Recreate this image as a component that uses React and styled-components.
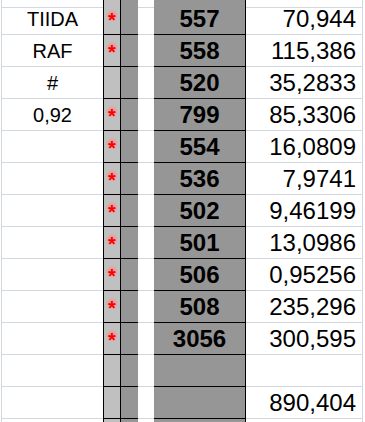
import React from "react";
import styled, { createGlobalStyle, css } from "styled-components";

const GRID = "#d3d7e0";
const INK = "#000";

const GlobalStyle = createGlobalStyle`
	html, body {
		margin: 0;
		padding: 0;
		background: #fff;
	}
	body {
		font-family: "Liberation Sans", Arial, sans-serif;
	}
`;

const Sheet = styled.div`
	width: 365px;
	height: 422px;
	overflow: hidden;
	padding-left: 1px;
	box-sizing: border-box;
	background: #fff;
`;

const Row = styled.div`
	display: grid;
	grid-template-columns: 102px 18px 17px 16px 92px 117px;
	height: ${({ $h }) => $h}px;
`;

const kinds = {
	label: css`
		border-left: 1px solid ${GRID};
		border-bottom: 1px solid ${GRID};
		justify-content: center;
		font-size: 20px;
		padding-top: 1px;
	`,
	mark: css`
		background: #c0c0c0;
		border-left: 1px solid ${INK};
		border-right: 1px solid ${INK};
		border-bottom: 1px solid ${INK};
		justify-content: center;
		align-items: flex-start;
		padding-top: 7px;
	`,
	shade: css`
		background: #969696;
		border-bottom: 1px solid ${INK};
	`,
	gap: css`
		border-bottom: 1px solid ${GRID};
	`,
	code: css`
		background: #969696;
		border-right: 1px solid ${INK};
		border-bottom: 1px solid ${INK};
		justify-content: center;
		font-size: 24px;
		font-weight: 700;
		padding-top: 1px;
	`,
	value: css`
		border-right: 1px solid ${GRID};
		border-bottom: 1px solid ${GRID};
		justify-content: flex-end;
		font-size: 24px;
		padding-right: 6px;
		padding-top: 1px;
	`,
};

const Cell = styled.div`
	display: flex;
	align-items: center;
	box-sizing: border-box;
	min-width: 0;
	color: #000;
	line-height: 1;
	white-space: nowrap;
	${({ $kind }) => kinds[$kind]}
`;

const Star = styled.span`
	display: block;
	padding: 0 4px;
	font-size: 20px;
	font-weight: 700;
	line-height: 20px;
	color: #f00;
	background: radial-gradient(
		circle at 50% 27%,
		rgba(240, 130, 130, 0.75) 0,
		rgba(240, 150, 150, 0.55) 4px,
		rgba(240, 170, 170, 0) 6.5px
	);
`;

const rows = [
	["TIIDA", true, "557", "70,944"],
	["RAF", true, "558", "115,386"],
	["#", false, "520", "35,2833"],
	["0,92", true, "799", "85,3306"],
	["", true, "554", "16,0809"],
	["", true, "536", "7,9741"],
	["", true, "502", "9,46199"],
	["", true, "501", "13,0986"],
	["", true, "506", "0,95256"],
	["", true, "508", "235,296"],
	["", true, "3056", "300,595"],
	["", false, "", ""],
	["", false, "", "890,404"],
	["", false, "", ""],
];

function SheetRow({ label, star, code, value, h = 32 }) {
	return (
		<Row $h={h}>
			<Cell $kind='label'>{label}</Cell>
			<Cell $kind='mark'>{star && <Star>*</Star>}</Cell>
			<Cell $kind='shade' />
			<Cell $kind='gap' />
			<Cell $kind='code'>{code}</Cell>
			<Cell $kind='value'>{value}</Cell>
		</Row>
	);
}

export default function App() {
	return (
		<>
			<GlobalStyle />
			<Sheet>
				<SheetRow h={3} />
				{rows.map(([label, star, code, value], i) => (
					<SheetRow
						key={i}
						label={label}
						star={star}
						code={code}
						value={value}
					/>
				))}
			</Sheet>
		</>
	);
}
